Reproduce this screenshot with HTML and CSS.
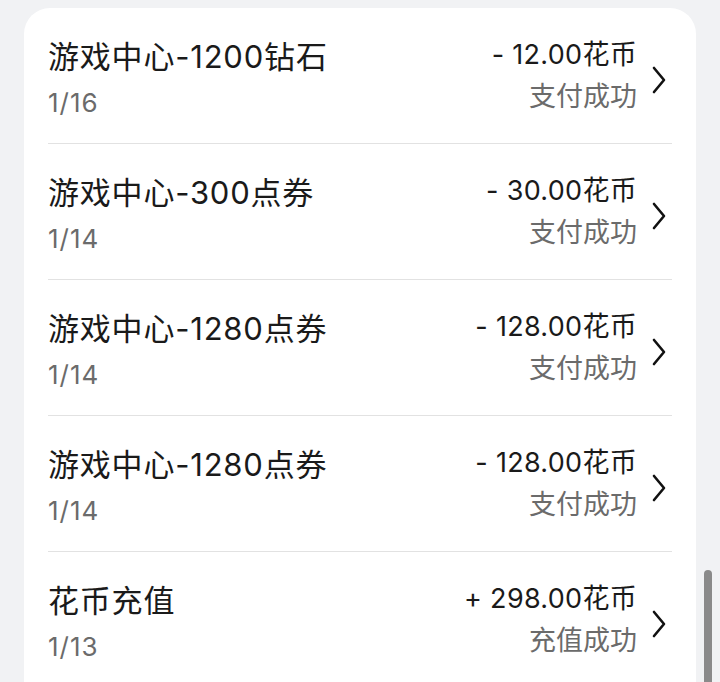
FILE: index.html
```html
<!DOCTYPE html>
<html lang="zh-CN">

<head>
    <meta charset="UTF-8">
    <meta name="viewport" content="width=device-width, initial-scale=1.0">
    <title>花币记录</title>
    <link rel="stylesheet" href="styles.css">
</head>

<body>
    <div class="page">
        <div class="record-list">
            <div class="record">
                <div class="record-info">
                    <div class="record-title">游戏中心-1200钻石</div>
                    <div class="record-date">1/16</div>
                </div>
                <div class="record-amount">
                    <div class="amount">- 12.00花币</div>
                    <div class="status">支付成功</div>
                </div>
                <svg class="chevron" viewBox="0 0 16 28" width="16" height="28">
                    <path d="M3 2 L13 14 L3 26" fill="none" stroke="#111" stroke-width="2.6" stroke-linecap="round" stroke-linejoin="round" />
                </svg>
            </div>

            <div class="record">
                <div class="record-info">
                    <div class="record-title">游戏中心-300点券</div>
                    <div class="record-date">1/14</div>
                </div>
                <div class="record-amount">
                    <div class="amount">- 30.00花币</div>
                    <div class="status">支付成功</div>
                </div>
                <svg class="chevron" viewBox="0 0 16 28" width="16" height="28">
                    <path d="M3 2 L13 14 L3 26" fill="none" stroke="#111" stroke-width="2.6" stroke-linecap="round" stroke-linejoin="round" />
                </svg>
            </div>

            <div class="record">
                <div class="record-info">
                    <div class="record-title">游戏中心-1280点券</div>
                    <div class="record-date">1/14</div>
                </div>
                <div class="record-amount">
                    <div class="amount">- 128.00花币</div>
                    <div class="status">支付成功</div>
                </div>
                <svg class="chevron" viewBox="0 0 16 28" width="16" height="28">
                    <path d="M3 2 L13 14 L3 26" fill="none" stroke="#111" stroke-width="2.6" stroke-linecap="round" stroke-linejoin="round" />
                </svg>
            </div>

            <div class="record">
                <div class="record-info">
                    <div class="record-title">游戏中心-1280点券</div>
                    <div class="record-date">1/14</div>
                </div>
                <div class="record-amount">
                    <div class="amount">- 128.00花币</div>
                    <div class="status">支付成功</div>
                </div>
                <svg class="chevron" viewBox="0 0 16 28" width="16" height="28">
                    <path d="M3 2 L13 14 L3 26" fill="none" stroke="#111" stroke-width="2.6" stroke-linecap="round" stroke-linejoin="round" />
                </svg>
            </div>

            <div class="record">
                <div class="record-info">
                    <div class="record-title">花币充值</div>
                    <div class="record-date">1/13</div>
                </div>
                <div class="record-amount">
                    <div class="amount">+ 298.00花币</div>
                    <div class="status">充值成功</div>
                </div>
                <svg class="chevron" viewBox="0 0 16 28" width="16" height="28">
                    <path d="M3 2 L13 14 L3 26" fill="none" stroke="#111" stroke-width="2.6" stroke-linecap="round" stroke-linejoin="round" />
                </svg>
            </div>
        </div>

        <div class="scrollbar"></div>
    </div>
</body>

</html>
```

FILE: styles.css
```css
html,
body {
    height: 100%;
}

body {
    font-family: Inter, "Noto Sans CJK SC", sans-serif;
    background-color: #f1f2f4;
    margin: 0;
    padding: 0;
    color: #1a1a1a;
    overflow: hidden;
}

.page {
    position: relative;
    height: 100%;
    padding: 8px 24px 0 24px;
    box-sizing: border-box;
}

.record-list {
    width: 672px;
    background-color: #fff;
    border-radius: 26px 26px 0 0;
    padding: 0 24px;
    box-sizing: border-box;
}

.record {
    display: flex;
    align-items: flex-start;
    height: 136px;
    border-bottom: 1px solid #e2e2e2;
    box-sizing: border-box;
}

.record-info {
    flex: 1;
    padding-top: 29px;
}

.record-title {
    font-size: 31px;
    line-height: 40px;
    letter-spacing: 0.8px;
    color: #1a1a1a;
}

.record-date {
    font-size: 26px;
    line-height: 32px;
    margin-top: 10px;
    letter-spacing: 1px;
    color: #6b6b6b;
}

.record-amount {
    text-align: right;
    padding-top: 29px;
}

.amount {
    font-size: 27px;
    line-height: 36px;
    letter-spacing: 0.3px;
    color: #1a1a1a;
}

.status {
    font-size: 27px;
    line-height: 36px;
    margin-top: 6px;
    color: #6b6b6b;
}

.chevron {
    margin: 58px 5px 0 14px;
}

/* scroll indicator on the right edge */
.scrollbar {
    position: absolute;
    right: 8px;
    top: 570px;
    width: 8px;
    height: 140px;
    border-radius: 4px;
    background-color: #8a8a8a;
}
```
